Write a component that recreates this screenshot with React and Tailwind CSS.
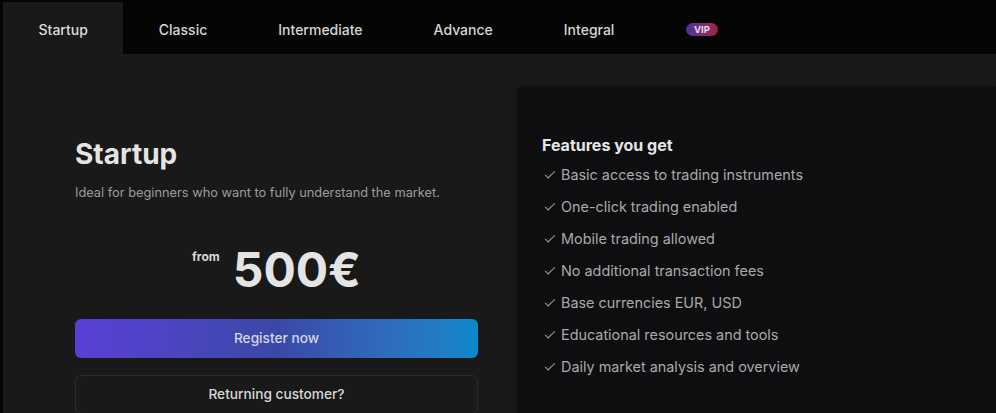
import { Check } from 'lucide-react';

const tabs = ['Startup', 'Classic', 'Intermediate', 'Advance', 'Integral'];

const features = [
  'Basic access to trading instruments',
  'One-click trading enabled',
  'Mobile trading allowed',
  'No additional transaction fees',
  'Base currencies EUR, USD',
  'Educational resources and tools',
  'Daily market analysis and overview',
];

function App() {
  return (
    <div className="w-[996px] h-[413px] overflow-hidden bg-[#050505] font-['Inter',sans-serif] flex flex-col">
      {/* Tabs */}
      <div className="flex h-[54px] pt-[2px] pl-[3px] shrink-0">
        {tabs.map((tab, i) => (
          <div
            key={tab}
            className={
              i === 0
                ? 'flex items-center pt-[3px] px-[35.5px] bg-[#191919] text-[14px] font-medium text-[#dcdcdc]'
                : 'flex items-center pt-[3px] px-[35.5px] text-[14px] font-medium text-[#d6d6d6]'
            }
          >
            {tab}
          </div>
        ))}
        <div className="flex items-center pt-[3px] px-[36px]">
          <span className="h-[13px] px-[8px] rounded-full bg-gradient-to-r from-[#4b2f94] to-[#a11d3e] text-[9.5px] font-bold leading-[13px] text-[#e2dcf0]">
            VIP
          </span>
        </div>
      </div>

      {/* Content */}
      <div className="ml-[3px] flex-1 bg-[#191919] flex">
        <div className="w-[515px] shrink-0 pl-[72px] pr-[40px] pt-[83px]">
          <h2 className="text-[28px] leading-[34px] font-bold text-[#e4e4e4]">Startup</h2>
          <p className="mt-[13px] text-[12.8px] leading-[18px] text-[#9c9c9c]">
            Ideal for beginners who want to fully understand the market.
          </p>
          <div className="mt-[40px] flex justify-center items-start gap-[13px]">
            <span className="mt-[6px] text-[12px] font-bold text-[#d8d8d8]">from</span>
            <span className="text-[48px] leading-[56px] font-bold text-[#e4e4e4]">500€</span>
          </div>
          <button className="mt-[21px] w-full h-[39px] rounded-[6px] bg-gradient-to-r from-[#5a3fd8] via-[#3a48a8] to-[#0a88cc] text-[13.7px] font-medium text-[#d4d6ea]">
            Register now
          </button>
          <button className="mt-[17px] w-full h-[39px] rounded-[6px] border border-[#2a2a2a] text-[13.7px] font-medium text-[#d8d8d8]">
            Returning customer?
          </button>
        </div>

        <div className="flex-1 mt-[33px] bg-[#0e0e10] rounded-tl-[4px] shadow-[0_0_6px_rgba(0,0,0,0.5)] pl-[24px] pt-[47px]">
          <h3 className="text-[16px] leading-[22px] font-bold text-[#e6e6e6]">Features you get</h3>
          <ul className="mt-[3px]">
            {features.map((f) => (
              <li key={f} className="flex items-center h-[32px] text-[14.4px] text-[#a9a9a9]">
                <Check size={14} strokeWidth={1.8} className="ml-[1px] mr-[4px] text-[#a8a8a8]" />
                {f}
              </li>
            ))}
          </ul>
        </div>
      </div>
    </div>
  );
}

export default App;
